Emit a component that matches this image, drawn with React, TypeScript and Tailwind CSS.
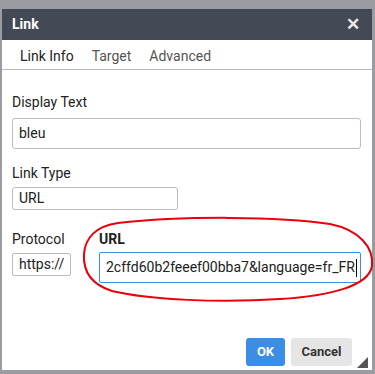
import React from 'react';

const App: React.FC = () => {
  return (
    <div className="relative w-[375px] h-[374px] bg-[#9b9ca1] pt-[9px] pl-[2px] pr-[3px] pb-[4px] font-['Roboto',sans-serif] text-[#222]">
      <div className="relative flex h-full flex-col bg-white">
        <div className="flex h-[31px] items-center justify-between bg-[#434a56] pl-[10px] pr-[12px]">
          <span className="text-[14px] font-bold text-white">Link</span>
          <span className="text-[17px] font-bold leading-none text-[#e8e8e8]">✕</span>
        </div>

        <div className="flex h-[30px] items-center gap-[18px] border-b border-[#bbb] pl-[18px] pt-[3px] text-[14px] text-[#555]">
          <span className="text-[#222]">Link Info</span>
          <span>Target</span>
          <span>Advanced</span>
        </div>

        <div className="flex flex-col px-[10px] pt-[24px] text-[14px]">
          <label className="leading-[16px]">Display Text</label>
          <div className="mt-[8px] flex h-[31px] w-[349px] items-center rounded-[3px] border border-[#bcbcbc] px-[6px]">
            bleu
          </div>

          <label className="mt-[16px] leading-[16px]">Link Type</label>
          <div className="mt-[6px] flex h-[23px] w-[166px] items-center rounded-[3px] border border-[#bcbcbc] px-[6px]">
            URL
          </div>

          <div className="mt-[21px] flex gap-[28px]">
            <div className="flex flex-col">
              <label className="leading-[16px]">Protocol</label>
              <div className="mt-[6px] flex h-[23px] w-[59px] items-center rounded-[2px] border border-[#bcbcbc] px-[6px]">
                https://
              </div>
            </div>
            <div className="flex flex-col">
              <label className="font-bold leading-[16px]">URL</label>
              <div className="mt-[5px] flex h-[31px] w-[262px] items-center overflow-hidden whitespace-nowrap rounded-[2px] border border-[#3a8ee6] px-[6px] text-[14px]">
                2cffd60b2feeef00bba7&amp;language=fr_FR
                <span className="ml-[1px] inline-block h-[18px] w-px shrink-0 bg-black" />
              </div>
            </div>
          </div>
        </div>

        <div className="mt-auto flex justify-end gap-[6px] pb-[4px] pr-[20px]">
          <div className="flex h-[28px] w-[39px] items-center justify-center rounded-[3px] bg-[#3a8ee6] text-[13px] font-bold text-white">
            OK
          </div>
          <div className="flex h-[28px] w-[61px] items-center justify-center rounded-[3px] bg-[#e5e5e5] text-[13px] font-bold text-[#333]">
            Cancel
          </div>
        </div>

        <svg className="absolute bottom-[2px] right-[4px]" width="11" height="11" viewBox="0 0 11 11">
          <polygon points="11,0 11,11 0,11" fill="#555" />
        </svg>
      </div>

      <svg className="pointer-events-none absolute left-0 top-0" width="375" height="374" viewBox="0 0 375 374">
        <path
          d="M118 223 C 180 216, 280 216, 330 224 C 360 230, 374 248, 372 266 C 369 286, 330 296, 280 299 C 220 303, 150 300, 112 291 C 90 284, 83 270, 84 254 C 85 238, 96 226, 118 223 Z"
          fill="none"
          stroke="#e8000a"
          strokeWidth="2"
        />
      </svg>
    </div>
  );
};

export default App;
